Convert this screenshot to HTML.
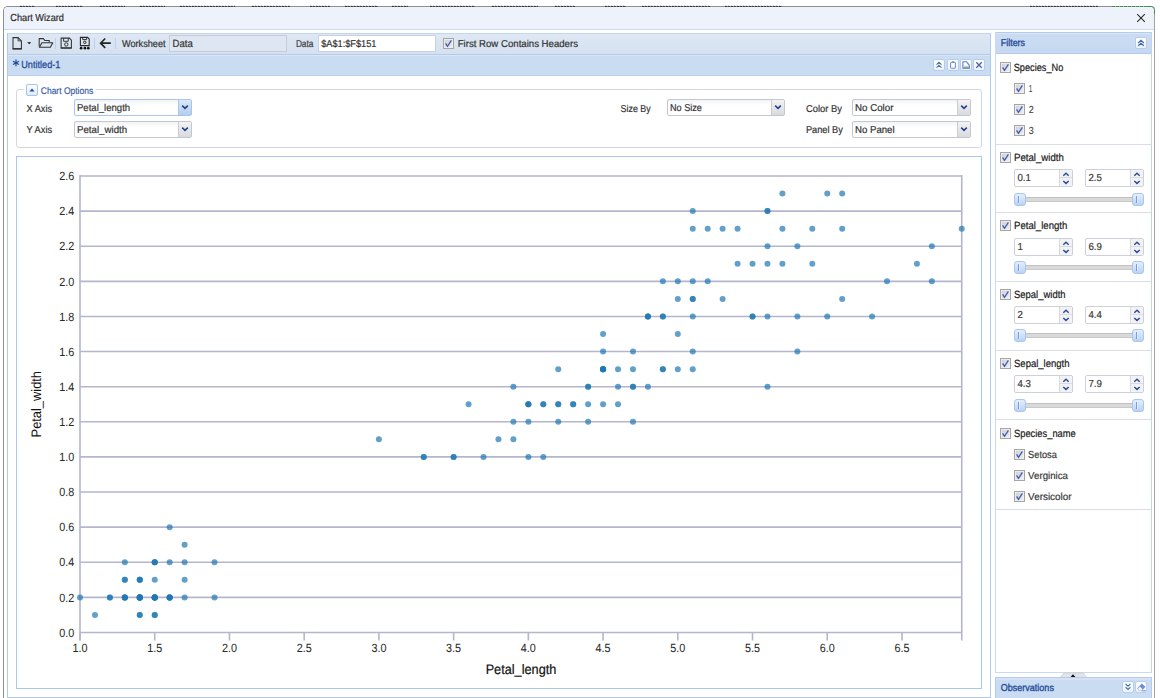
<!DOCTYPE html>
<html><head><meta charset="utf-8"><style>
html,body{margin:0;padding:0;}
body{width:1160px;height:698px;position:relative;overflow:hidden;background:#fff;font-family:"Liberation Sans",sans-serif;}
.b{position:absolute;}
.t{position:absolute;white-space:nowrap;}
</style></head><body>
<div class="b" style="left:3px;top:6px;width:1152px;height:714px;border:1px solid #8f8f8f;border-right-color:#a2a2a2;border-radius:5px 5px 0 0;background:#fff;box-sizing:border-box"></div>
<div class="b" style="left:4px;top:7px;width:1150px;height:22px;background:#eef2fa;border-radius:4px 4px 0 0"></div>
<div class="b" style="left:4px;top:29px;width:1150px;height:1px;background:#c9daf0"></div>
<svg class="b" style="left:1136px;top:13px;" width="10" height="10" viewBox="0 0 10 10"><path d="M1.2 1.2L8.8 8.8M8.8 1.2L1.2 8.8" stroke="#2a2a2a" stroke-width="1.05" fill="none"/></svg>
<div class="b" style="left:20px;top:6px;width:15px;height:1px;background:repeating-linear-gradient(90deg,#3a3a3a 0 2px,#777 2px 3px,#444 3px 5px,#8a8a8a 5px 6px)"></div>
<div class="b" style="left:20px;top:5px;width:15px;height:1px;background:repeating-linear-gradient(90deg,#d4d4d4 0 1px,#f4f4f4 1px 3px)"></div>
<div class="b" style="left:56px;top:6px;width:27px;height:1px;background:repeating-linear-gradient(90deg,#3a3a3a 0 2px,#777 2px 3px,#444 3px 5px,#8a8a8a 5px 6px)"></div>
<div class="b" style="left:56px;top:5px;width:27px;height:1px;background:repeating-linear-gradient(90deg,#d4d4d4 0 1px,#f4f4f4 1px 3px)"></div>
<div class="b" style="left:100px;top:6px;width:25px;height:1px;background:repeating-linear-gradient(90deg,#3a3a3a 0 2px,#777 2px 3px,#444 3px 5px,#8a8a8a 5px 6px)"></div>
<div class="b" style="left:100px;top:5px;width:25px;height:1px;background:repeating-linear-gradient(90deg,#d4d4d4 0 1px,#f4f4f4 1px 3px)"></div>
<div class="b" style="left:140px;top:6px;width:25px;height:1px;background:repeating-linear-gradient(90deg,#3a3a3a 0 2px,#777 2px 3px,#444 3px 5px,#8a8a8a 5px 6px)"></div>
<div class="b" style="left:140px;top:5px;width:25px;height:1px;background:repeating-linear-gradient(90deg,#d4d4d4 0 1px,#f4f4f4 1px 3px)"></div>
<div class="b" style="left:180px;top:6px;width:55px;height:1px;background:repeating-linear-gradient(90deg,#3a3a3a 0 2px,#777 2px 3px,#444 3px 5px,#8a8a8a 5px 6px)"></div>
<div class="b" style="left:180px;top:5px;width:55px;height:1px;background:repeating-linear-gradient(90deg,#d4d4d4 0 1px,#f4f4f4 1px 3px)"></div>
<div class="b" style="left:252px;top:6px;width:38px;height:1px;background:repeating-linear-gradient(90deg,#3a3a3a 0 2px,#777 2px 3px,#444 3px 5px,#8a8a8a 5px 6px)"></div>
<div class="b" style="left:252px;top:5px;width:38px;height:1px;background:repeating-linear-gradient(90deg,#d4d4d4 0 1px,#f4f4f4 1px 3px)"></div>
<div class="b" style="left:310px;top:6px;width:20px;height:1px;background:repeating-linear-gradient(90deg,#3a3a3a 0 2px,#777 2px 3px,#444 3px 5px,#8a8a8a 5px 6px)"></div>
<div class="b" style="left:310px;top:5px;width:20px;height:1px;background:repeating-linear-gradient(90deg,#d4d4d4 0 1px,#f4f4f4 1px 3px)"></div>
<div class="b" style="left:345px;top:6px;width:33px;height:1px;background:repeating-linear-gradient(90deg,#3a3a3a 0 2px,#777 2px 3px,#444 3px 5px,#8a8a8a 5px 6px)"></div>
<div class="b" style="left:345px;top:5px;width:33px;height:1px;background:repeating-linear-gradient(90deg,#d4d4d4 0 1px,#f4f4f4 1px 3px)"></div>
<div class="b" style="left:392px;top:6px;width:16px;height:1px;background:repeating-linear-gradient(90deg,#3a3a3a 0 2px,#777 2px 3px,#444 3px 5px,#8a8a8a 5px 6px)"></div>
<div class="b" style="left:392px;top:5px;width:16px;height:1px;background:repeating-linear-gradient(90deg,#d4d4d4 0 1px,#f4f4f4 1px 3px)"></div>
<div class="b" style="left:430px;top:6px;width:45px;height:1px;background:repeating-linear-gradient(90deg,#3a3a3a 0 2px,#777 2px 3px,#444 3px 5px,#8a8a8a 5px 6px)"></div>
<div class="b" style="left:430px;top:5px;width:45px;height:1px;background:repeating-linear-gradient(90deg,#d4d4d4 0 1px,#f4f4f4 1px 3px)"></div>
<div class="b" style="left:492px;top:6px;width:46px;height:1px;background:repeating-linear-gradient(90deg,#3a3a3a 0 2px,#777 2px 3px,#444 3px 5px,#8a8a8a 5px 6px)"></div>
<div class="b" style="left:492px;top:5px;width:46px;height:1px;background:repeating-linear-gradient(90deg,#d4d4d4 0 1px,#f4f4f4 1px 3px)"></div>
<div class="b" style="left:555px;top:6px;width:20px;height:1px;background:repeating-linear-gradient(90deg,#3a3a3a 0 2px,#777 2px 3px,#444 3px 5px,#8a8a8a 5px 6px)"></div>
<div class="b" style="left:555px;top:5px;width:20px;height:1px;background:repeating-linear-gradient(90deg,#d4d4d4 0 1px,#f4f4f4 1px 3px)"></div>
<div class="b" style="left:605px;top:6px;width:21px;height:1px;background:repeating-linear-gradient(90deg,#3a3a3a 0 2px,#777 2px 3px,#444 3px 5px,#8a8a8a 5px 6px)"></div>
<div class="b" style="left:605px;top:5px;width:21px;height:1px;background:repeating-linear-gradient(90deg,#d4d4d4 0 1px,#f4f4f4 1px 3px)"></div>
<div class="b" style="left:642px;top:6px;width:68px;height:1px;background:repeating-linear-gradient(90deg,#3a3a3a 0 2px,#777 2px 3px,#444 3px 5px,#8a8a8a 5px 6px)"></div>
<div class="b" style="left:642px;top:5px;width:68px;height:1px;background:repeating-linear-gradient(90deg,#d4d4d4 0 1px,#f4f4f4 1px 3px)"></div>
<div class="b" style="left:725px;top:6px;width:57px;height:1px;background:repeating-linear-gradient(90deg,#3a3a3a 0 2px,#777 2px 3px,#444 3px 5px,#8a8a8a 5px 6px)"></div>
<div class="b" style="left:725px;top:5px;width:57px;height:1px;background:repeating-linear-gradient(90deg,#d4d4d4 0 1px,#f4f4f4 1px 3px)"></div>
<div class="b" style="left:1030px;top:6px;width:68px;height:1px;background:repeating-linear-gradient(90deg,#3a3a3a 0 2px,#777 2px 3px,#444 3px 5px,#8a8a8a 5px 6px)"></div>
<div class="b" style="left:1030px;top:5px;width:68px;height:1px;background:repeating-linear-gradient(90deg,#d4d4d4 0 1px,#f4f4f4 1px 3px)"></div>
<div class="b" style="left:1112px;top:6px;width:38px;height:1px;background:repeating-linear-gradient(90deg,#3f8a4c 0 3px,#8fb99a 3px 4px);opacity:.85"></div>
<svg class="b" style="left:1146px;top:5px;" width="10" height="12" viewBox="0 0 10 12"><path d="M0 1.5H5.5Q8.5 1.5 8.5 4.5V9" fill="none" stroke="#3f8a4c" stroke-width="1" opacity=".85"/></svg>
<div class="b" style="left:7px;top:33px;width:984px;height:665px;border:1px solid #afcaee;box-sizing:border-box;background:#fff"></div>
<div class="b" style="left:8px;top:33px;width:982px;height:21px;background:linear-gradient(#dfe8f4,#d5e1f0);border-top:1px solid #c4d6ee;box-sizing:border-box"></div>
<div class="b" style="left:8px;top:54px;width:982px;height:1px;background:#b2cbea"></div>
<div class="b" style="left:8px;top:55px;width:982px;height:1px;background:#dae6f5"></div>
<div class="b" style="left:8px;top:56px;width:982px;height:19px;background:#c9dcf2"></div>
<div class="b" style="left:8px;top:75px;width:982px;height:1px;background:#b8cfee"></div>
<svg class="b" style="left:11px;top:36px;" width="24" height="15" viewBox="0 0 24 15"><path d="M2 1.6H7.1L10.4 4.9V12.7H2Z" fill="none" stroke="#333" stroke-width="1.05"/><path d="M7.1 1.6V4.9H10.4" fill="none" stroke="#333" stroke-width=".9"/><path d="M1.6 12.8H10.8" stroke="#333" stroke-width="1.5"/><path d="M16.2 6.3H20.2L18.2 8.2Z" fill="#111"/></svg>
<svg class="b" style="left:38px;top:37px;" width="16" height="12" viewBox="0 0 16 12"><path d="M1.2 9.6V1.6H5.3L6.8 3.4H11.3V5.4" fill="none" stroke="#333" stroke-width="1.05" stroke-linejoin="round"/><path d="M1.4 10.3L3.9 5.7H14.8L12.3 10.3Z" fill="none" stroke="#333" stroke-width="1.1" stroke-linejoin="round"/></svg>
<div class="b" style="left:55px;top:38px;width:1px;height:11px;background:#b9d1f2"></div>
<svg class="b" style="left:60px;top:37px;" width="13" height="13" viewBox="0 0 13 13"><path d="M1.1 1.1H9.4L11.4 3.1V10.9H1.1Z" fill="none" stroke="#333" stroke-width="1.05"/><path d="M3.6 1.1V4.3H8.3V1.1" fill="none" stroke="#333" stroke-width=".95"/><circle cx="6.3" cy="7.5" r="1.7" fill="none" stroke="#333" stroke-width="1"/><path d="M0.8 11H11.6" stroke="#333" stroke-width="1.3"/></svg>
<svg class="b" style="left:79px;top:36px;" width="12" height="14" viewBox="0 0 12 14"><path d="M1.4 1.4H8.6L10.2 3V9.6H1.4Z" fill="none" stroke="#2a2a2a" stroke-width="1.1"/><path d="M3.7 1.4V3.6H7.6V1.4" fill="none" stroke="#2a2a2a" stroke-width=".95"/><circle cx="5.8" cy="6.3" r="1.25" fill="none" stroke="#2a2a2a" stroke-width="1"/><circle cx="2.1" cy="12.2" r="1.35" fill="#111"/><circle cx="5.9" cy="12.2" r="1.35" fill="#111"/><circle cx="9.3" cy="12.2" r="1.35" fill="#111"/></svg>
<div class="b" style="left:94px;top:38px;width:1px;height:11px;background:#b9d1f2"></div>
<svg class="b" style="left:99px;top:37px;" width="13" height="12" viewBox="0 0 13 12"><path d="M11.8 6.2H2.2M6.2 1.5L1.6 6.2L6.2 10.9" fill="none" stroke="#262626" stroke-width="1.7"/></svg>
<div class="b" style="left:115px;top:38px;width:1px;height:11px;background:#b9d1f2"></div>
<div class="b" style="left:169px;top:35px;width:118px;height:17px;background:#dde6f1;border:1px solid #c3ccd8;box-sizing:border-box"></div>
<div class="b" style="left:318px;top:35px;width:118px;height:17px;background:#fff;border:1px solid #c8d1dc;box-sizing:border-box"></div>
<svg class="b" style="left:443px;top:38px;" width="11" height="11" viewBox="0 0 11 11"><defs><linearGradient id="cbg" x1="0" y1="0" x2="1" y2="1"><stop offset="0" stop-color="#cdcdcd"/><stop offset="1" stop-color="#f2f2f2"/></linearGradient></defs><rect x="0.5" y="0.5" width="10" height="10" fill="url(#cbg)" stroke="#a6a6a6"/><rect x="1.5" y="1.5" width="8" height="8" fill="none" stroke="#f2f2f2" stroke-width=".7"/><path d="M2.6 5.3L4.5 8.3L8.4 2.4" fill="none" stroke="#3d5cb8" stroke-width="1.35"/></svg>
<svg class="b" style="left:12px;top:59px;" width="8" height="8" viewBox="0 0 8 8"><path d="M4 0.4V7.2M1 2.2L7 5.4M7 2.2L1 5.4" stroke="#1e4a9c" stroke-width="1.15"/></svg>
<div class="b" style="left:933px;top:59px;width:12px;height:12px;border:1px solid #b9cdea;border-radius:2px;background:linear-gradient(#ffffff,#eaf1fa);box-sizing:border-box"></div>
<svg class="b" style="left:933px;top:59px;" width="12" height="12" viewBox="0 0 12 12"><path d="M3.5 5.6L6 3.3L8.5 5.6M3.5 8.6L6 6.3L8.5 8.6" fill="none" stroke="#4a78b0" stroke-width="1.1"/></svg>
<div class="b" style="left:947px;top:59px;width:12px;height:12px;border:1px solid #b9cdea;border-radius:2px;background:linear-gradient(#ffffff,#eaf1fa);box-sizing:border-box"></div>
<svg class="b" style="left:947px;top:59px;" width="12" height="12" viewBox="0 0 12 12"><rect x="3.6" y="3.4" width="4.8" height="5.8" rx=".6" fill="#fff" stroke="#6a86c8" stroke-width="1"/><path d="M5 2.8H7" stroke="#6a86c8" stroke-width="1"/></svg>
<div class="b" style="left:960px;top:59px;width:12px;height:12px;border:1px solid #b9cdea;border-radius:2px;background:linear-gradient(#ffffff,#eaf1fa);box-sizing:border-box"></div>
<svg class="b" style="left:960px;top:59px;" width="12" height="12" viewBox="0 0 12 12"><path d="M2.9 9.3V2.7H6.4L9.4 6.3V9.3Z" fill="#fff" stroke="#5f7fc8" stroke-width="1.1" stroke-linejoin="round"/><path d="M3.5 7.3H8.9" stroke="#a6d68f" stroke-width="1"/><path d="M3.4 8.8H8.9" stroke="#5f7fc8" stroke-width="1"/></svg>
<div class="b" style="left:973px;top:59px;width:12px;height:12px;border:1px solid #b9cdea;border-radius:2px;background:linear-gradient(#ffffff,#eaf1fa);box-sizing:border-box"></div>
<svg class="b" style="left:973px;top:59px;" width="12" height="12" viewBox="0 0 12 12"><path d="M3.3 3.3L8.7 8.7M8.7 3.3L3.3 8.7" stroke="#4a5fb0" stroke-width="1.3"/></svg>
<div class="b" style="left:16px;top:89px;width:966px;height:59px;border:1px solid #d5d8df;border-radius:3px;box-sizing:border-box"></div>
<div class="b" style="left:24px;top:84px;width:72px;height:12px;background:#fff"></div>
<div class="b" style="left:26px;top:84px;width:12px;height:12px;border:1px solid #a9c3e6;border-radius:2px;background:linear-gradient(#fdfeff,#dfeaf8);box-sizing:border-box"></div>
<svg class="b" style="left:26px;top:84px;" width="12" height="12" viewBox="0 0 12 12"><path d="M3.4 7.4L6 4.6L8.6 7.4Z" fill="#2846a0"/></svg>
<div class="b" style="left:74px;top:99px;width:118px;height:17px;border:1px solid #a7c6ec;border-radius:2px;background:linear-gradient(#f1f3f6,#ffffff 35%);box-sizing:border-box"></div>
<div class="b" style="left:178px;top:100px;width:13px;height:15px;background:linear-gradient(#dbe8f7,#b3cdee);border-left:1px solid #a7c6ec;box-sizing:border-box"></div>
<svg class="b" style="left:179px;top:104px;" width="12" height="7" viewBox="0 0 12 7"><path d="M3.2 1.6L6 4.4L8.8 1.6" fill="none" stroke="#1f3f8f" stroke-width="1.5"/></svg>
<div class="b" style="left:74px;top:121px;width:118px;height:17px;border:1px solid #c3c7d0;border-radius:2px;background:linear-gradient(#f1f3f6,#ffffff 35%);box-sizing:border-box"></div>
<div class="b" style="left:178px;top:122px;width:13px;height:15px;background:linear-gradient(#f3f3f3,#d9dadd);border-left:1px solid #c9ccd2;box-sizing:border-box"></div>
<svg class="b" style="left:179px;top:126px;" width="12" height="7" viewBox="0 0 12 7"><path d="M3.2 1.6L6 4.4L8.8 1.6" fill="none" stroke="#1f3f8f" stroke-width="1.5"/></svg>
<div class="b" style="left:667px;top:99px;width:118px;height:17px;border:1px solid #c3c7d0;border-radius:2px;background:linear-gradient(#f1f3f6,#ffffff 35%);box-sizing:border-box"></div>
<div class="b" style="left:771px;top:100px;width:13px;height:15px;background:linear-gradient(#f3f3f3,#d9dadd);border-left:1px solid #c9ccd2;box-sizing:border-box"></div>
<svg class="b" style="left:772px;top:104px;" width="12" height="7" viewBox="0 0 12 7"><path d="M3.2 1.6L6 4.4L8.8 1.6" fill="none" stroke="#1f3f8f" stroke-width="1.5"/></svg>
<div class="b" style="left:852px;top:99px;width:119px;height:17px;border:1px solid #c3c7d0;border-radius:2px;background:linear-gradient(#f1f3f6,#ffffff 35%);box-sizing:border-box"></div>
<div class="b" style="left:957px;top:100px;width:13px;height:15px;background:linear-gradient(#f3f3f3,#d9dadd);border-left:1px solid #c9ccd2;box-sizing:border-box"></div>
<svg class="b" style="left:958px;top:104px;" width="12" height="7" viewBox="0 0 12 7"><path d="M3.2 1.6L6 4.4L8.8 1.6" fill="none" stroke="#1f3f8f" stroke-width="1.5"/></svg>
<div class="b" style="left:852px;top:121px;width:119px;height:17px;border:1px solid #c3c7d0;border-radius:2px;background:linear-gradient(#f1f3f6,#ffffff 35%);box-sizing:border-box"></div>
<div class="b" style="left:957px;top:122px;width:13px;height:15px;background:linear-gradient(#f3f3f3,#d9dadd);border-left:1px solid #c9ccd2;box-sizing:border-box"></div>
<svg class="b" style="left:958px;top:126px;" width="12" height="7" viewBox="0 0 12 7"><path d="M3.2 1.6L6 4.4L8.8 1.6" fill="none" stroke="#1f3f8f" stroke-width="1.5"/></svg>
<div class="b" style="left:16px;top:156px;width:966px;height:533px;border:1px solid #a9c8ef;box-sizing:border-box;background:#fff"></div>
<svg class="b" style="left:0px;top:0px;pointer-events:none" width="1160" height="698" viewBox="0 0 1160 698"><line x1="80.0" y1="632.50" x2="961.75" y2="632.50" stroke="#b3b6cc" stroke-width="1.6"/><line x1="80.0" y1="597.38" x2="961.75" y2="597.38" stroke="#b3b6cc" stroke-width="1.6"/><line x1="80.0" y1="562.27" x2="961.75" y2="562.27" stroke="#b3b6cc" stroke-width="1.6"/><line x1="80.0" y1="527.15" x2="961.75" y2="527.15" stroke="#b3b6cc" stroke-width="1.6"/><line x1="80.0" y1="492.04" x2="961.75" y2="492.04" stroke="#b3b6cc" stroke-width="1.6"/><line x1="80.0" y1="456.92" x2="961.75" y2="456.92" stroke="#b3b6cc" stroke-width="1.6"/><line x1="80.0" y1="421.80" x2="961.75" y2="421.80" stroke="#b3b6cc" stroke-width="1.6"/><line x1="80.0" y1="386.69" x2="961.75" y2="386.69" stroke="#b3b6cc" stroke-width="1.6"/><line x1="80.0" y1="351.57" x2="961.75" y2="351.57" stroke="#b3b6cc" stroke-width="1.6"/><line x1="80.0" y1="316.46" x2="961.75" y2="316.46" stroke="#b3b6cc" stroke-width="1.6"/><line x1="80.0" y1="281.34" x2="961.75" y2="281.34" stroke="#b3b6cc" stroke-width="1.6"/><line x1="80.0" y1="246.22" x2="961.75" y2="246.22" stroke="#b3b6cc" stroke-width="1.6"/><line x1="80.0" y1="211.11" x2="961.75" y2="211.11" stroke="#b3b6cc" stroke-width="1.6"/><line x1="80.0" y1="175.99" x2="961.75" y2="175.99" stroke="#b3b6cc" stroke-width="1.6"/><line x1="80.0" y1="175.09" x2="80.0" y2="640.5" stroke="#b3b6cc" stroke-width="1.6"/><line x1="961.75" y1="175.09" x2="961.75" y2="640.5" stroke="#b3b6cc" stroke-width="1.6"/><line x1="80.00" y1="632.5" x2="80.00" y2="640.5" stroke="#b3b6cc" stroke-width="1.6"/><line x1="154.72" y1="632.5" x2="154.72" y2="640.5" stroke="#b3b6cc" stroke-width="1.6"/><line x1="229.45" y1="632.5" x2="229.45" y2="640.5" stroke="#b3b6cc" stroke-width="1.6"/><line x1="304.17" y1="632.5" x2="304.17" y2="640.5" stroke="#b3b6cc" stroke-width="1.6"/><line x1="378.90" y1="632.5" x2="378.90" y2="640.5" stroke="#b3b6cc" stroke-width="1.6"/><line x1="453.62" y1="632.5" x2="453.62" y2="640.5" stroke="#b3b6cc" stroke-width="1.6"/><line x1="528.35" y1="632.5" x2="528.35" y2="640.5" stroke="#b3b6cc" stroke-width="1.6"/><line x1="603.07" y1="632.5" x2="603.07" y2="640.5" stroke="#b3b6cc" stroke-width="1.6"/><line x1="677.80" y1="632.5" x2="677.80" y2="640.5" stroke="#b3b6cc" stroke-width="1.6"/><line x1="752.52" y1="632.5" x2="752.52" y2="640.5" stroke="#b3b6cc" stroke-width="1.6"/><line x1="827.25" y1="632.5" x2="827.25" y2="640.5" stroke="#b3b6cc" stroke-width="1.6"/><line x1="901.97" y1="632.5" x2="901.97" y2="640.5" stroke="#b3b6cc" stroke-width="1.6"/><circle cx="139.78" cy="597.38" r="3" fill="#1f77b4" fill-opacity="0.7"/><circle cx="139.78" cy="597.38" r="3" fill="#1f77b4" fill-opacity="0.7"/><circle cx="124.84" cy="597.38" r="3" fill="#1f77b4" fill-opacity="0.7"/><circle cx="154.72" cy="597.38" r="3" fill="#1f77b4" fill-opacity="0.7"/><circle cx="139.78" cy="597.38" r="3" fill="#1f77b4" fill-opacity="0.7"/><circle cx="184.61" cy="562.27" r="3" fill="#1f77b4" fill-opacity="0.7"/><circle cx="139.78" cy="579.83" r="3" fill="#1f77b4" fill-opacity="0.7"/><circle cx="154.72" cy="597.38" r="3" fill="#1f77b4" fill-opacity="0.7"/><circle cx="139.78" cy="597.38" r="3" fill="#1f77b4" fill-opacity="0.7"/><circle cx="154.72" cy="614.94" r="3" fill="#1f77b4" fill-opacity="0.7"/><circle cx="154.72" cy="597.38" r="3" fill="#1f77b4" fill-opacity="0.7"/><circle cx="169.67" cy="597.38" r="3" fill="#1f77b4" fill-opacity="0.7"/><circle cx="139.78" cy="614.94" r="3" fill="#1f77b4" fill-opacity="0.7"/><circle cx="94.95" cy="614.94" r="3" fill="#1f77b4" fill-opacity="0.7"/><circle cx="109.89" cy="597.38" r="3" fill="#1f77b4" fill-opacity="0.7"/><circle cx="154.72" cy="562.27" r="3" fill="#1f77b4" fill-opacity="0.7"/><circle cx="124.84" cy="562.27" r="3" fill="#1f77b4" fill-opacity="0.7"/><circle cx="139.78" cy="579.83" r="3" fill="#1f77b4" fill-opacity="0.7"/><circle cx="184.61" cy="579.83" r="3" fill="#1f77b4" fill-opacity="0.7"/><circle cx="154.72" cy="579.83" r="3" fill="#1f77b4" fill-opacity="0.7"/><circle cx="184.61" cy="597.38" r="3" fill="#1f77b4" fill-opacity="0.7"/><circle cx="154.72" cy="562.27" r="3" fill="#1f77b4" fill-opacity="0.7"/><circle cx="80.00" cy="597.38" r="3" fill="#1f77b4" fill-opacity="0.7"/><circle cx="184.61" cy="544.71" r="3" fill="#1f77b4" fill-opacity="0.7"/><circle cx="214.50" cy="597.38" r="3" fill="#1f77b4" fill-opacity="0.7"/><circle cx="169.67" cy="597.38" r="3" fill="#1f77b4" fill-opacity="0.7"/><circle cx="169.67" cy="562.27" r="3" fill="#1f77b4" fill-opacity="0.7"/><circle cx="154.72" cy="597.38" r="3" fill="#1f77b4" fill-opacity="0.7"/><circle cx="139.78" cy="597.38" r="3" fill="#1f77b4" fill-opacity="0.7"/><circle cx="169.67" cy="597.38" r="3" fill="#1f77b4" fill-opacity="0.7"/><circle cx="169.67" cy="597.38" r="3" fill="#1f77b4" fill-opacity="0.7"/><circle cx="154.72" cy="562.27" r="3" fill="#1f77b4" fill-opacity="0.7"/><circle cx="154.72" cy="614.94" r="3" fill="#1f77b4" fill-opacity="0.7"/><circle cx="139.78" cy="597.38" r="3" fill="#1f77b4" fill-opacity="0.7"/><circle cx="154.72" cy="597.38" r="3" fill="#1f77b4" fill-opacity="0.7"/><circle cx="109.89" cy="597.38" r="3" fill="#1f77b4" fill-opacity="0.7"/><circle cx="124.84" cy="597.38" r="3" fill="#1f77b4" fill-opacity="0.7"/><circle cx="139.78" cy="614.94" r="3" fill="#1f77b4" fill-opacity="0.7"/><circle cx="124.84" cy="597.38" r="3" fill="#1f77b4" fill-opacity="0.7"/><circle cx="154.72" cy="597.38" r="3" fill="#1f77b4" fill-opacity="0.7"/><circle cx="124.84" cy="579.83" r="3" fill="#1f77b4" fill-opacity="0.7"/><circle cx="124.84" cy="579.83" r="3" fill="#1f77b4" fill-opacity="0.7"/><circle cx="124.84" cy="597.38" r="3" fill="#1f77b4" fill-opacity="0.7"/><circle cx="169.67" cy="527.15" r="3" fill="#1f77b4" fill-opacity="0.7"/><circle cx="214.50" cy="562.27" r="3" fill="#1f77b4" fill-opacity="0.7"/><circle cx="139.78" cy="579.83" r="3" fill="#1f77b4" fill-opacity="0.7"/><circle cx="169.67" cy="597.38" r="3" fill="#1f77b4" fill-opacity="0.7"/><circle cx="139.78" cy="597.38" r="3" fill="#1f77b4" fill-opacity="0.7"/><circle cx="154.72" cy="597.38" r="3" fill="#1f77b4" fill-opacity="0.7"/><circle cx="139.78" cy="597.38" r="3" fill="#1f77b4" fill-opacity="0.7"/><circle cx="632.97" cy="386.69" r="3" fill="#1f77b4" fill-opacity="0.7"/><circle cx="603.07" cy="369.13" r="3" fill="#1f77b4" fill-opacity="0.7"/><circle cx="662.86" cy="369.13" r="3" fill="#1f77b4" fill-opacity="0.7"/><circle cx="528.35" cy="404.25" r="3" fill="#1f77b4" fill-opacity="0.7"/><circle cx="618.02" cy="369.13" r="3" fill="#1f77b4" fill-opacity="0.7"/><circle cx="603.07" cy="404.25" r="3" fill="#1f77b4" fill-opacity="0.7"/><circle cx="632.97" cy="351.57" r="3" fill="#1f77b4" fill-opacity="0.7"/><circle cx="423.73" cy="456.92" r="3" fill="#1f77b4" fill-opacity="0.7"/><circle cx="618.02" cy="404.25" r="3" fill="#1f77b4" fill-opacity="0.7"/><circle cx="513.40" cy="386.69" r="3" fill="#1f77b4" fill-opacity="0.7"/><circle cx="453.62" cy="456.92" r="3" fill="#1f77b4" fill-opacity="0.7"/><circle cx="558.24" cy="369.13" r="3" fill="#1f77b4" fill-opacity="0.7"/><circle cx="528.35" cy="456.92" r="3" fill="#1f77b4" fill-opacity="0.7"/><circle cx="632.97" cy="386.69" r="3" fill="#1f77b4" fill-opacity="0.7"/><circle cx="468.57" cy="404.25" r="3" fill="#1f77b4" fill-opacity="0.7"/><circle cx="588.13" cy="386.69" r="3" fill="#1f77b4" fill-opacity="0.7"/><circle cx="603.07" cy="369.13" r="3" fill="#1f77b4" fill-opacity="0.7"/><circle cx="543.29" cy="456.92" r="3" fill="#1f77b4" fill-opacity="0.7"/><circle cx="603.07" cy="369.13" r="3" fill="#1f77b4" fill-opacity="0.7"/><circle cx="513.40" cy="439.36" r="3" fill="#1f77b4" fill-opacity="0.7"/><circle cx="647.91" cy="316.46" r="3" fill="#1f77b4" fill-opacity="0.7"/><circle cx="528.35" cy="404.25" r="3" fill="#1f77b4" fill-opacity="0.7"/><circle cx="662.86" cy="369.13" r="3" fill="#1f77b4" fill-opacity="0.7"/><circle cx="632.97" cy="421.80" r="3" fill="#1f77b4" fill-opacity="0.7"/><circle cx="573.18" cy="404.25" r="3" fill="#1f77b4" fill-opacity="0.7"/><circle cx="588.13" cy="386.69" r="3" fill="#1f77b4" fill-opacity="0.7"/><circle cx="647.91" cy="386.69" r="3" fill="#1f77b4" fill-opacity="0.7"/><circle cx="677.80" cy="334.01" r="3" fill="#1f77b4" fill-opacity="0.7"/><circle cx="603.07" cy="369.13" r="3" fill="#1f77b4" fill-opacity="0.7"/><circle cx="453.62" cy="456.92" r="3" fill="#1f77b4" fill-opacity="0.7"/><circle cx="498.46" cy="439.36" r="3" fill="#1f77b4" fill-opacity="0.7"/><circle cx="483.51" cy="456.92" r="3" fill="#1f77b4" fill-opacity="0.7"/><circle cx="513.40" cy="421.80" r="3" fill="#1f77b4" fill-opacity="0.7"/><circle cx="692.74" cy="351.57" r="3" fill="#1f77b4" fill-opacity="0.7"/><circle cx="603.07" cy="369.13" r="3" fill="#1f77b4" fill-opacity="0.7"/><circle cx="603.07" cy="351.57" r="3" fill="#1f77b4" fill-opacity="0.7"/><circle cx="632.97" cy="369.13" r="3" fill="#1f77b4" fill-opacity="0.7"/><circle cx="588.13" cy="404.25" r="3" fill="#1f77b4" fill-opacity="0.7"/><circle cx="543.29" cy="404.25" r="3" fill="#1f77b4" fill-opacity="0.7"/><circle cx="528.35" cy="404.25" r="3" fill="#1f77b4" fill-opacity="0.7"/><circle cx="588.13" cy="421.80" r="3" fill="#1f77b4" fill-opacity="0.7"/><circle cx="618.02" cy="386.69" r="3" fill="#1f77b4" fill-opacity="0.7"/><circle cx="528.35" cy="421.80" r="3" fill="#1f77b4" fill-opacity="0.7"/><circle cx="423.73" cy="456.92" r="3" fill="#1f77b4" fill-opacity="0.7"/><circle cx="558.24" cy="404.25" r="3" fill="#1f77b4" fill-opacity="0.7"/><circle cx="558.24" cy="421.80" r="3" fill="#1f77b4" fill-opacity="0.7"/><circle cx="558.24" cy="404.25" r="3" fill="#1f77b4" fill-opacity="0.7"/><circle cx="573.18" cy="404.25" r="3" fill="#1f77b4" fill-opacity="0.7"/><circle cx="378.90" cy="439.36" r="3" fill="#1f77b4" fill-opacity="0.7"/><circle cx="543.29" cy="404.25" r="3" fill="#1f77b4" fill-opacity="0.7"/><circle cx="827.25" cy="193.55" r="3" fill="#1f77b4" fill-opacity="0.7"/><circle cx="692.74" cy="298.90" r="3" fill="#1f77b4" fill-opacity="0.7"/><circle cx="812.30" cy="263.78" r="3" fill="#1f77b4" fill-opacity="0.7"/><circle cx="767.47" cy="316.46" r="3" fill="#1f77b4" fill-opacity="0.7"/><circle cx="797.36" cy="246.22" r="3" fill="#1f77b4" fill-opacity="0.7"/><circle cx="916.92" cy="263.78" r="3" fill="#1f77b4" fill-opacity="0.7"/><circle cx="603.07" cy="334.01" r="3" fill="#1f77b4" fill-opacity="0.7"/><circle cx="872.08" cy="316.46" r="3" fill="#1f77b4" fill-opacity="0.7"/><circle cx="797.36" cy="316.46" r="3" fill="#1f77b4" fill-opacity="0.7"/><circle cx="842.19" cy="193.55" r="3" fill="#1f77b4" fill-opacity="0.7"/><circle cx="692.74" cy="281.34" r="3" fill="#1f77b4" fill-opacity="0.7"/><circle cx="722.63" cy="298.90" r="3" fill="#1f77b4" fill-opacity="0.7"/><circle cx="752.52" cy="263.78" r="3" fill="#1f77b4" fill-opacity="0.7"/><circle cx="677.80" cy="281.34" r="3" fill="#1f77b4" fill-opacity="0.7"/><circle cx="692.74" cy="211.11" r="3" fill="#1f77b4" fill-opacity="0.7"/><circle cx="722.63" cy="228.67" r="3" fill="#1f77b4" fill-opacity="0.7"/><circle cx="752.52" cy="316.46" r="3" fill="#1f77b4" fill-opacity="0.7"/><circle cx="931.87" cy="246.22" r="3" fill="#1f77b4" fill-opacity="0.7"/><circle cx="961.75" cy="228.67" r="3" fill="#1f77b4" fill-opacity="0.7"/><circle cx="677.80" cy="369.13" r="3" fill="#1f77b4" fill-opacity="0.7"/><circle cx="782.41" cy="228.67" r="3" fill="#1f77b4" fill-opacity="0.7"/><circle cx="662.86" cy="281.34" r="3" fill="#1f77b4" fill-opacity="0.7"/><circle cx="931.87" cy="281.34" r="3" fill="#1f77b4" fill-opacity="0.7"/><circle cx="662.86" cy="316.46" r="3" fill="#1f77b4" fill-opacity="0.7"/><circle cx="782.41" cy="263.78" r="3" fill="#1f77b4" fill-opacity="0.7"/><circle cx="827.25" cy="316.46" r="3" fill="#1f77b4" fill-opacity="0.7"/><circle cx="647.91" cy="316.46" r="3" fill="#1f77b4" fill-opacity="0.7"/><circle cx="662.86" cy="316.46" r="3" fill="#1f77b4" fill-opacity="0.7"/><circle cx="767.47" cy="263.78" r="3" fill="#1f77b4" fill-opacity="0.7"/><circle cx="797.36" cy="351.57" r="3" fill="#1f77b4" fill-opacity="0.7"/><circle cx="842.19" cy="298.90" r="3" fill="#1f77b4" fill-opacity="0.7"/><circle cx="887.03" cy="281.34" r="3" fill="#1f77b4" fill-opacity="0.7"/><circle cx="767.47" cy="246.22" r="3" fill="#1f77b4" fill-opacity="0.7"/><circle cx="692.74" cy="369.13" r="3" fill="#1f77b4" fill-opacity="0.7"/><circle cx="767.47" cy="386.69" r="3" fill="#1f77b4" fill-opacity="0.7"/><circle cx="842.19" cy="228.67" r="3" fill="#1f77b4" fill-opacity="0.7"/><circle cx="767.47" cy="211.11" r="3" fill="#1f77b4" fill-opacity="0.7"/><circle cx="752.52" cy="316.46" r="3" fill="#1f77b4" fill-opacity="0.7"/><circle cx="647.91" cy="316.46" r="3" fill="#1f77b4" fill-opacity="0.7"/><circle cx="737.58" cy="263.78" r="3" fill="#1f77b4" fill-opacity="0.7"/><circle cx="767.47" cy="211.11" r="3" fill="#1f77b4" fill-opacity="0.7"/><circle cx="692.74" cy="228.67" r="3" fill="#1f77b4" fill-opacity="0.7"/><circle cx="692.74" cy="298.90" r="3" fill="#1f77b4" fill-opacity="0.7"/><circle cx="812.30" cy="228.67" r="3" fill="#1f77b4" fill-opacity="0.7"/><circle cx="782.41" cy="193.55" r="3" fill="#1f77b4" fill-opacity="0.7"/><circle cx="707.69" cy="228.67" r="3" fill="#1f77b4" fill-opacity="0.7"/><circle cx="677.80" cy="298.90" r="3" fill="#1f77b4" fill-opacity="0.7"/><circle cx="707.69" cy="281.34" r="3" fill="#1f77b4" fill-opacity="0.7"/><circle cx="737.58" cy="228.67" r="3" fill="#1f77b4" fill-opacity="0.7"/><circle cx="692.74" cy="316.46" r="3" fill="#1f77b4" fill-opacity="0.7"/></svg>
<div class="b" style="left:995px;top:32px;width:157px;height:641px;border:1px solid #b3cbed;border-left-color:#c9dbf3;border-right-color:#c0d5f1;border-bottom-color:#c6daf3;box-sizing:border-box;background:#fff"></div>
<div class="b" style="left:996px;top:33px;width:155px;height:21px;background:linear-gradient(#d8e6f6 0 1px,#cbdcf2 1px,#c6d9f1);border-bottom:1px solid #b3cbed;box-sizing:border-box"></div>
<div class="b" style="left:1135px;top:37px;width:12px;height:12px;border:1px solid #b9cdea;border-radius:2px;background:linear-gradient(#ffffff,#eaf1fa);box-sizing:border-box"></div>
<svg class="b" style="left:1135px;top:37px;" width="12" height="12" viewBox="0 0 12 12"><path d="M3.2 6L6 3.4L8.8 6M3.2 8.8L6 6.2L8.8 8.8" fill="none" stroke="#3b6ba8" stroke-width="1.2"/></svg>
<svg class="b" style="left:1000px;top:62px;" width="11" height="11" viewBox="0 0 11 11"><defs><linearGradient id="cbg" x1="0" y1="0" x2="1" y2="1"><stop offset="0" stop-color="#cdcdcd"/><stop offset="1" stop-color="#f2f2f2"/></linearGradient></defs><rect x="0.5" y="0.5" width="10" height="10" fill="url(#cbg)" stroke="#a6a6a6"/><rect x="1.5" y="1.5" width="8" height="8" fill="none" stroke="#f2f2f2" stroke-width=".7"/><path d="M2.6 5.3L4.5 8.3L8.4 2.4" fill="none" stroke="#3d5cb8" stroke-width="1.35"/></svg>
<svg class="b" style="left:1014px;top:83px;" width="11" height="11" viewBox="0 0 11 11"><defs><linearGradient id="cbg" x1="0" y1="0" x2="1" y2="1"><stop offset="0" stop-color="#cdcdcd"/><stop offset="1" stop-color="#f2f2f2"/></linearGradient></defs><rect x="0.5" y="0.5" width="10" height="10" fill="url(#cbg)" stroke="#a6a6a6"/><rect x="1.5" y="1.5" width="8" height="8" fill="none" stroke="#f2f2f2" stroke-width=".7"/><path d="M2.6 5.3L4.5 8.3L8.4 2.4" fill="none" stroke="#3d5cb8" stroke-width="1.35"/></svg>
<svg class="b" style="left:1014px;top:104px;" width="11" height="11" viewBox="0 0 11 11"><defs><linearGradient id="cbg" x1="0" y1="0" x2="1" y2="1"><stop offset="0" stop-color="#cdcdcd"/><stop offset="1" stop-color="#f2f2f2"/></linearGradient></defs><rect x="0.5" y="0.5" width="10" height="10" fill="url(#cbg)" stroke="#a6a6a6"/><rect x="1.5" y="1.5" width="8" height="8" fill="none" stroke="#f2f2f2" stroke-width=".7"/><path d="M2.6 5.3L4.5 8.3L8.4 2.4" fill="none" stroke="#3d5cb8" stroke-width="1.35"/></svg>
<svg class="b" style="left:1014px;top:125px;" width="11" height="11" viewBox="0 0 11 11"><defs><linearGradient id="cbg" x1="0" y1="0" x2="1" y2="1"><stop offset="0" stop-color="#cdcdcd"/><stop offset="1" stop-color="#f2f2f2"/></linearGradient></defs><rect x="0.5" y="0.5" width="10" height="10" fill="url(#cbg)" stroke="#a6a6a6"/><rect x="1.5" y="1.5" width="8" height="8" fill="none" stroke="#f2f2f2" stroke-width=".7"/><path d="M2.6 5.3L4.5 8.3L8.4 2.4" fill="none" stroke="#3d5cb8" stroke-width="1.35"/></svg>
<div class="b" style="left:996px;top:144px;width:155px;height:1px;background:#d9dee6"></div>
<svg class="b" style="left:1000px;top:152px;" width="11" height="11" viewBox="0 0 11 11"><defs><linearGradient id="cbg" x1="0" y1="0" x2="1" y2="1"><stop offset="0" stop-color="#cdcdcd"/><stop offset="1" stop-color="#f2f2f2"/></linearGradient></defs><rect x="0.5" y="0.5" width="10" height="10" fill="url(#cbg)" stroke="#a6a6a6"/><rect x="1.5" y="1.5" width="8" height="8" fill="none" stroke="#f2f2f2" stroke-width=".7"/><path d="M2.6 5.3L4.5 8.3L8.4 2.4" fill="none" stroke="#3d5cb8" stroke-width="1.35"/></svg>
<div class="b" style="left:1014px;top:169px;width:59px;height:18px;border:1px solid #cdd0da;border-radius:2px;background:#fff;box-sizing:border-box"></div>
<div class="b" style="left:1059px;top:170px;width:13px;height:16px;border-left:1px solid #d6d9e0;background:#f2f2f4;box-sizing:border-box"></div>
<div class="b" style="left:1060px;top:177px;width:12px;height:1px;background:#d9dce3"></div>
<svg class="b" style="left:1060px;top:170px;" width="12" height="17" viewBox="0 0 12 17"><path d="M3.3 5.7L6 3.3L8.7 5.7M3.3 11L6 13.4L8.7 11" fill="none" stroke="#2b4d98" stroke-width="1.5"/></svg>
<div class="b" style="left:1085px;top:169px;width:59px;height:18px;border:1px solid #cdd0da;border-radius:2px;background:#fff;box-sizing:border-box"></div>
<div class="b" style="left:1130px;top:170px;width:13px;height:16px;border-left:1px solid #d6d9e0;background:#f2f2f4;box-sizing:border-box"></div>
<div class="b" style="left:1131px;top:177px;width:12px;height:1px;background:#d9dce3"></div>
<svg class="b" style="left:1131px;top:170px;" width="12" height="17" viewBox="0 0 12 17"><path d="M3.3 5.7L6 3.3L8.7 5.7M3.3 11L6 13.4L8.7 11" fill="none" stroke="#2b4d98" stroke-width="1.5"/></svg>
<div class="b" style="left:1024px;top:197px;width:110px;height:5px;background:linear-gradient(#c2c2c2 0 1px,#d9d9d9 1px 4px,#c9c9c9 4px)"></div>
<div class="b" style="left:1014px;top:193px;width:12px;height:13px;border:1px solid #a8c6ee;border-radius:3px;background:linear-gradient(#e4effd,#b9d3f5);box-sizing:border-box"></div>
<div class="b" style="left:1018px;top:196px;width:1px;height:7px;background:#7b9bd3"></div>
<div class="b" style="left:1019px;top:196px;width:1px;height:7px;background:#f2f7ff;opacity:.6"></div>
<div class="b" style="left:1132px;top:193px;width:12px;height:13px;border:1px solid #a8c6ee;border-radius:3px;background:linear-gradient(#e4effd,#b9d3f5);box-sizing:border-box"></div>
<div class="b" style="left:1136px;top:196px;width:1px;height:7px;background:#7b9bd3"></div>
<div class="b" style="left:1137px;top:196px;width:1px;height:7px;background:#f2f7ff;opacity:.6"></div>
<div class="b" style="left:996px;top:212px;width:155px;height:1px;background:#d9dee6"></div>
<svg class="b" style="left:1000px;top:220px;" width="11" height="11" viewBox="0 0 11 11"><defs><linearGradient id="cbg" x1="0" y1="0" x2="1" y2="1"><stop offset="0" stop-color="#cdcdcd"/><stop offset="1" stop-color="#f2f2f2"/></linearGradient></defs><rect x="0.5" y="0.5" width="10" height="10" fill="url(#cbg)" stroke="#a6a6a6"/><rect x="1.5" y="1.5" width="8" height="8" fill="none" stroke="#f2f2f2" stroke-width=".7"/><path d="M2.6 5.3L4.5 8.3L8.4 2.4" fill="none" stroke="#3d5cb8" stroke-width="1.35"/></svg>
<div class="b" style="left:1014px;top:238px;width:59px;height:18px;border:1px solid #cdd0da;border-radius:2px;background:#fff;box-sizing:border-box"></div>
<div class="b" style="left:1059px;top:239px;width:13px;height:16px;border-left:1px solid #d6d9e0;background:#f2f2f4;box-sizing:border-box"></div>
<div class="b" style="left:1060px;top:246px;width:12px;height:1px;background:#d9dce3"></div>
<svg class="b" style="left:1060px;top:239px;" width="12" height="17" viewBox="0 0 12 17"><path d="M3.3 5.7L6 3.3L8.7 5.7M3.3 11L6 13.4L8.7 11" fill="none" stroke="#2b4d98" stroke-width="1.5"/></svg>
<div class="b" style="left:1085px;top:238px;width:59px;height:18px;border:1px solid #cdd0da;border-radius:2px;background:#fff;box-sizing:border-box"></div>
<div class="b" style="left:1130px;top:239px;width:13px;height:16px;border-left:1px solid #d6d9e0;background:#f2f2f4;box-sizing:border-box"></div>
<div class="b" style="left:1131px;top:246px;width:12px;height:1px;background:#d9dce3"></div>
<svg class="b" style="left:1131px;top:239px;" width="12" height="17" viewBox="0 0 12 17"><path d="M3.3 5.7L6 3.3L8.7 5.7M3.3 11L6 13.4L8.7 11" fill="none" stroke="#2b4d98" stroke-width="1.5"/></svg>
<div class="b" style="left:1024px;top:265px;width:110px;height:5px;background:linear-gradient(#c2c2c2 0 1px,#d9d9d9 1px 4px,#c9c9c9 4px)"></div>
<div class="b" style="left:1014px;top:261px;width:12px;height:13px;border:1px solid #a8c6ee;border-radius:3px;background:linear-gradient(#e4effd,#b9d3f5);box-sizing:border-box"></div>
<div class="b" style="left:1018px;top:264px;width:1px;height:7px;background:#7b9bd3"></div>
<div class="b" style="left:1019px;top:264px;width:1px;height:7px;background:#f2f7ff;opacity:.6"></div>
<div class="b" style="left:1132px;top:261px;width:12px;height:13px;border:1px solid #a8c6ee;border-radius:3px;background:linear-gradient(#e4effd,#b9d3f5);box-sizing:border-box"></div>
<div class="b" style="left:1136px;top:264px;width:1px;height:7px;background:#7b9bd3"></div>
<div class="b" style="left:1137px;top:264px;width:1px;height:7px;background:#f2f7ff;opacity:.6"></div>
<div class="b" style="left:996px;top:281px;width:155px;height:1px;background:#d9dee6"></div>
<svg class="b" style="left:1000px;top:289px;" width="11" height="11" viewBox="0 0 11 11"><defs><linearGradient id="cbg" x1="0" y1="0" x2="1" y2="1"><stop offset="0" stop-color="#cdcdcd"/><stop offset="1" stop-color="#f2f2f2"/></linearGradient></defs><rect x="0.5" y="0.5" width="10" height="10" fill="url(#cbg)" stroke="#a6a6a6"/><rect x="1.5" y="1.5" width="8" height="8" fill="none" stroke="#f2f2f2" stroke-width=".7"/><path d="M2.6 5.3L4.5 8.3L8.4 2.4" fill="none" stroke="#3d5cb8" stroke-width="1.35"/></svg>
<div class="b" style="left:1014px;top:306px;width:59px;height:18px;border:1px solid #cdd0da;border-radius:2px;background:#fff;box-sizing:border-box"></div>
<div class="b" style="left:1059px;top:307px;width:13px;height:16px;border-left:1px solid #d6d9e0;background:#f2f2f4;box-sizing:border-box"></div>
<div class="b" style="left:1060px;top:314px;width:12px;height:1px;background:#d9dce3"></div>
<svg class="b" style="left:1060px;top:307px;" width="12" height="17" viewBox="0 0 12 17"><path d="M3.3 5.7L6 3.3L8.7 5.7M3.3 11L6 13.4L8.7 11" fill="none" stroke="#2b4d98" stroke-width="1.5"/></svg>
<div class="b" style="left:1085px;top:306px;width:59px;height:18px;border:1px solid #cdd0da;border-radius:2px;background:#fff;box-sizing:border-box"></div>
<div class="b" style="left:1130px;top:307px;width:13px;height:16px;border-left:1px solid #d6d9e0;background:#f2f2f4;box-sizing:border-box"></div>
<div class="b" style="left:1131px;top:314px;width:12px;height:1px;background:#d9dce3"></div>
<svg class="b" style="left:1131px;top:307px;" width="12" height="17" viewBox="0 0 12 17"><path d="M3.3 5.7L6 3.3L8.7 5.7M3.3 11L6 13.4L8.7 11" fill="none" stroke="#2b4d98" stroke-width="1.5"/></svg>
<div class="b" style="left:1024px;top:333px;width:110px;height:5px;background:linear-gradient(#c2c2c2 0 1px,#d9d9d9 1px 4px,#c9c9c9 4px)"></div>
<div class="b" style="left:1014px;top:329px;width:12px;height:13px;border:1px solid #a8c6ee;border-radius:3px;background:linear-gradient(#e4effd,#b9d3f5);box-sizing:border-box"></div>
<div class="b" style="left:1018px;top:332px;width:1px;height:7px;background:#7b9bd3"></div>
<div class="b" style="left:1019px;top:332px;width:1px;height:7px;background:#f2f7ff;opacity:.6"></div>
<div class="b" style="left:1132px;top:329px;width:12px;height:13px;border:1px solid #a8c6ee;border-radius:3px;background:linear-gradient(#e4effd,#b9d3f5);box-sizing:border-box"></div>
<div class="b" style="left:1136px;top:332px;width:1px;height:7px;background:#7b9bd3"></div>
<div class="b" style="left:1137px;top:332px;width:1px;height:7px;background:#f2f7ff;opacity:.6"></div>
<div class="b" style="left:996px;top:350px;width:155px;height:1px;background:#d9dee6"></div>
<svg class="b" style="left:1000px;top:358px;" width="11" height="11" viewBox="0 0 11 11"><defs><linearGradient id="cbg" x1="0" y1="0" x2="1" y2="1"><stop offset="0" stop-color="#cdcdcd"/><stop offset="1" stop-color="#f2f2f2"/></linearGradient></defs><rect x="0.5" y="0.5" width="10" height="10" fill="url(#cbg)" stroke="#a6a6a6"/><rect x="1.5" y="1.5" width="8" height="8" fill="none" stroke="#f2f2f2" stroke-width=".7"/><path d="M2.6 5.3L4.5 8.3L8.4 2.4" fill="none" stroke="#3d5cb8" stroke-width="1.35"/></svg>
<div class="b" style="left:1014px;top:375px;width:59px;height:18px;border:1px solid #cdd0da;border-radius:2px;background:#fff;box-sizing:border-box"></div>
<div class="b" style="left:1059px;top:376px;width:13px;height:16px;border-left:1px solid #d6d9e0;background:#f2f2f4;box-sizing:border-box"></div>
<div class="b" style="left:1060px;top:383px;width:12px;height:1px;background:#d9dce3"></div>
<svg class="b" style="left:1060px;top:376px;" width="12" height="17" viewBox="0 0 12 17"><path d="M3.3 5.7L6 3.3L8.7 5.7M3.3 11L6 13.4L8.7 11" fill="none" stroke="#2b4d98" stroke-width="1.5"/></svg>
<div class="b" style="left:1085px;top:375px;width:59px;height:18px;border:1px solid #cdd0da;border-radius:2px;background:#fff;box-sizing:border-box"></div>
<div class="b" style="left:1130px;top:376px;width:13px;height:16px;border-left:1px solid #d6d9e0;background:#f2f2f4;box-sizing:border-box"></div>
<div class="b" style="left:1131px;top:383px;width:12px;height:1px;background:#d9dce3"></div>
<svg class="b" style="left:1131px;top:376px;" width="12" height="17" viewBox="0 0 12 17"><path d="M3.3 5.7L6 3.3L8.7 5.7M3.3 11L6 13.4L8.7 11" fill="none" stroke="#2b4d98" stroke-width="1.5"/></svg>
<div class="b" style="left:1024px;top:403px;width:110px;height:5px;background:linear-gradient(#c2c2c2 0 1px,#d9d9d9 1px 4px,#c9c9c9 4px)"></div>
<div class="b" style="left:1014px;top:399px;width:12px;height:13px;border:1px solid #a8c6ee;border-radius:3px;background:linear-gradient(#e4effd,#b9d3f5);box-sizing:border-box"></div>
<div class="b" style="left:1018px;top:402px;width:1px;height:7px;background:#7b9bd3"></div>
<div class="b" style="left:1019px;top:402px;width:1px;height:7px;background:#f2f7ff;opacity:.6"></div>
<div class="b" style="left:1132px;top:399px;width:12px;height:13px;border:1px solid #a8c6ee;border-radius:3px;background:linear-gradient(#e4effd,#b9d3f5);box-sizing:border-box"></div>
<div class="b" style="left:1136px;top:402px;width:1px;height:7px;background:#7b9bd3"></div>
<div class="b" style="left:1137px;top:402px;width:1px;height:7px;background:#f2f7ff;opacity:.6"></div>
<div class="b" style="left:996px;top:419px;width:155px;height:1px;background:#d9dee6"></div>
<svg class="b" style="left:1000px;top:428px;" width="11" height="11" viewBox="0 0 11 11"><defs><linearGradient id="cbg" x1="0" y1="0" x2="1" y2="1"><stop offset="0" stop-color="#cdcdcd"/><stop offset="1" stop-color="#f2f2f2"/></linearGradient></defs><rect x="0.5" y="0.5" width="10" height="10" fill="url(#cbg)" stroke="#a6a6a6"/><rect x="1.5" y="1.5" width="8" height="8" fill="none" stroke="#f2f2f2" stroke-width=".7"/><path d="M2.6 5.3L4.5 8.3L8.4 2.4" fill="none" stroke="#3d5cb8" stroke-width="1.35"/></svg>
<svg class="b" style="left:1014px;top:449px;" width="11" height="11" viewBox="0 0 11 11"><defs><linearGradient id="cbg" x1="0" y1="0" x2="1" y2="1"><stop offset="0" stop-color="#cdcdcd"/><stop offset="1" stop-color="#f2f2f2"/></linearGradient></defs><rect x="0.5" y="0.5" width="10" height="10" fill="url(#cbg)" stroke="#a6a6a6"/><rect x="1.5" y="1.5" width="8" height="8" fill="none" stroke="#f2f2f2" stroke-width=".7"/><path d="M2.6 5.3L4.5 8.3L8.4 2.4" fill="none" stroke="#3d5cb8" stroke-width="1.35"/></svg>
<svg class="b" style="left:1014px;top:470px;" width="11" height="11" viewBox="0 0 11 11"><defs><linearGradient id="cbg" x1="0" y1="0" x2="1" y2="1"><stop offset="0" stop-color="#cdcdcd"/><stop offset="1" stop-color="#f2f2f2"/></linearGradient></defs><rect x="0.5" y="0.5" width="10" height="10" fill="url(#cbg)" stroke="#a6a6a6"/><rect x="1.5" y="1.5" width="8" height="8" fill="none" stroke="#f2f2f2" stroke-width=".7"/><path d="M2.6 5.3L4.5 8.3L8.4 2.4" fill="none" stroke="#3d5cb8" stroke-width="1.35"/></svg>
<svg class="b" style="left:1014px;top:491px;" width="11" height="11" viewBox="0 0 11 11"><defs><linearGradient id="cbg" x1="0" y1="0" x2="1" y2="1"><stop offset="0" stop-color="#cdcdcd"/><stop offset="1" stop-color="#f2f2f2"/></linearGradient></defs><rect x="0.5" y="0.5" width="10" height="10" fill="url(#cbg)" stroke="#a6a6a6"/><rect x="1.5" y="1.5" width="8" height="8" fill="none" stroke="#f2f2f2" stroke-width=".7"/><path d="M2.6 5.3L4.5 8.3L8.4 2.4" fill="none" stroke="#3d5cb8" stroke-width="1.35"/></svg>
<div class="b" style="left:996px;top:509px;width:155px;height:1px;background:#d9dee6"></div>
<svg class="b" style="left:1059px;top:672px;" width="29" height="6" viewBox="0 0 29 6"><path d="M1 5.5L5 1H24L28 5.5Z" fill="#e4e4e4" stroke="#cfcfcf" stroke-width=".8"/><path d="M11.6 5L14 2.2L16.4 5Z" fill="#111"/></svg>
<div class="b" style="left:995px;top:677px;width:157px;height:21px;background:linear-gradient(#d3e3f5 0 2px,#c9dcf2 2px);border:1px solid #b3cbed;border-bottom:none;box-sizing:border-box"></div>
<div class="b" style="left:1122px;top:681px;width:12px;height:12px;border:1px solid #bcd0ec;border-radius:3px;background:linear-gradient(#ffffff,#eef4fc);box-sizing:border-box"></div>
<svg class="b" style="left:1122px;top:681px;" width="12" height="12" viewBox="0 0 12 12"><path d="M3.6 3L6 5.2L8.4 3M3.6 6.3L6 8.5L8.4 6.3" fill="none" stroke="#4a78b0" stroke-width="1.2"/></svg>
<div class="b" style="left:1135px;top:681px;width:12px;height:12px;border:1px solid #bcd0ec;border-radius:3px;background:linear-gradient(#ffffff,#eef4fc);box-sizing:border-box"></div>
<svg class="b" style="left:1135px;top:681px;" width="12" height="12" viewBox="0 0 12 12"><path d="M2.2 7.6L6.8 2.6L10.4 5.8L7 9.6H3.8Z" fill="#6a8ed8"/><path d="M3 7.6L5 5.8L7.6 8.2L6.6 9.2H3.9Z" fill="#fff"/><path d="M6.8 9.8H10.6" stroke="#6a8ed8" stroke-width="1"/></svg>
<svg class="b" style="left:0;top:0" width="1160" height="698" font-family="Liberation Sans, sans-serif" text-rendering="geometricPrecision"><text x="10.30" y="21.00" font-size="10.2" fill="#2b2b2b" textLength="53.70" lengthAdjust="spacingAndGlyphs" stroke="#2b2b2b" stroke-width="0.2">Chart Wizard</text>
<text x="121.90" y="46.80" font-size="10.0" fill="#333" textLength="43.70" lengthAdjust="spacingAndGlyphs" stroke="#333" stroke-width="0.2">Worksheet</text>
<text x="172.60" y="46.90" font-size="10.5" fill="#333" textLength="20.20" lengthAdjust="spacingAndGlyphs" stroke="#333" stroke-width="0.2">Data</text>
<text x="295.90" y="46.90" font-size="10.0" fill="#3a3a3a" textLength="17.50" lengthAdjust="spacingAndGlyphs" stroke="#3a3a3a" stroke-width="0.2">Data</text>
<text x="321.20" y="46.90" font-size="10.0" fill="#333" textLength="55.30" lengthAdjust="spacingAndGlyphs" stroke="#333" stroke-width="0.2">$A$1:$F$151</text>
<text x="457.70" y="47.10" font-size="10.0" fill="#333" textLength="120.30" lengthAdjust="spacingAndGlyphs" stroke="#333" stroke-width="0.2">First Row Contains Headers</text>
<text x="21.20" y="68.00" font-size="10.2" fill="#1e4896" textLength="39.30" lengthAdjust="spacingAndGlyphs" stroke="#1e4896" stroke-width="0.25">Untitled-1</text>
<text x="40.80" y="93.90" font-size="9.7" fill="#3b5ea6" textLength="52.40" lengthAdjust="spacingAndGlyphs" stroke="#3b5ea6" stroke-width="0.2">Chart Options</text>
<text x="26.50" y="111.50" font-size="10.0" fill="#333" textLength="25.60" lengthAdjust="spacingAndGlyphs" stroke="#333" stroke-width="0.2">X Axis</text>
<text x="26.50" y="132.60" font-size="10.0" fill="#333" textLength="25.60" lengthAdjust="spacingAndGlyphs" stroke="#333" stroke-width="0.2">Y Axis</text>
<text x="77.00" y="110.80" font-size="10.0" fill="#333" textLength="53.10" lengthAdjust="spacingAndGlyphs" stroke="#333" stroke-width="0.2">Petal_length</text>
<text x="77.00" y="132.80" font-size="10.0" fill="#333" textLength="50.10" lengthAdjust="spacingAndGlyphs" stroke="#333" stroke-width="0.2">Petal_width</text>
<text x="620.60" y="111.60" font-size="10.0" fill="#333" textLength="30.00" lengthAdjust="spacingAndGlyphs" stroke="#333" stroke-width="0.2">Size By</text>
<text x="670.00" y="110.80" font-size="10.0" fill="#333" textLength="31.90" lengthAdjust="spacingAndGlyphs" stroke="#333" stroke-width="0.2">No Size</text>
<text x="805.90" y="111.50" font-size="10.0" fill="#333" textLength="36.00" lengthAdjust="spacingAndGlyphs" stroke="#333" stroke-width="0.2">Color By</text>
<text x="805.90" y="132.80" font-size="10.0" fill="#333" textLength="37.00" lengthAdjust="spacingAndGlyphs" stroke="#333" stroke-width="0.2">Panel By</text>
<text x="855.00" y="110.80" font-size="10.0" fill="#333" textLength="38.40" lengthAdjust="spacingAndGlyphs" stroke="#333" stroke-width="0.2">No Color</text>
<text x="855.00" y="132.80" font-size="10.0" fill="#333" textLength="39.60" lengthAdjust="spacingAndGlyphs" stroke="#333" stroke-width="0.2">No Panel</text>
<text x="59.20" y="636.70" font-size="11.9" fill="#2a2a2a" textLength="15.00" lengthAdjust="spacingAndGlyphs" stroke="#2a2a2a" stroke-width="0.05">0.0</text>
<text x="59.20" y="601.58" font-size="11.9" fill="#2a2a2a" textLength="15.00" lengthAdjust="spacingAndGlyphs" stroke="#2a2a2a" stroke-width="0.05">0.2</text>
<text x="59.20" y="566.47" font-size="11.9" fill="#2a2a2a" textLength="15.00" lengthAdjust="spacingAndGlyphs" stroke="#2a2a2a" stroke-width="0.05">0.4</text>
<text x="59.20" y="531.35" font-size="11.9" fill="#2a2a2a" textLength="15.00" lengthAdjust="spacingAndGlyphs" stroke="#2a2a2a" stroke-width="0.05">0.6</text>
<text x="59.20" y="496.24" font-size="11.9" fill="#2a2a2a" textLength="15.00" lengthAdjust="spacingAndGlyphs" stroke="#2a2a2a" stroke-width="0.05">0.8</text>
<text x="59.20" y="461.12" font-size="11.9" fill="#2a2a2a" textLength="15.00" lengthAdjust="spacingAndGlyphs" stroke="#2a2a2a" stroke-width="0.05">1.0</text>
<text x="59.20" y="426.00" font-size="11.9" fill="#2a2a2a" textLength="15.00" lengthAdjust="spacingAndGlyphs" stroke="#2a2a2a" stroke-width="0.05">1.2</text>
<text x="59.20" y="390.89" font-size="11.9" fill="#2a2a2a" textLength="15.00" lengthAdjust="spacingAndGlyphs" stroke="#2a2a2a" stroke-width="0.05">1.4</text>
<text x="59.20" y="355.77" font-size="11.9" fill="#2a2a2a" textLength="15.00" lengthAdjust="spacingAndGlyphs" stroke="#2a2a2a" stroke-width="0.05">1.6</text>
<text x="59.20" y="320.66" font-size="11.9" fill="#2a2a2a" textLength="15.00" lengthAdjust="spacingAndGlyphs" stroke="#2a2a2a" stroke-width="0.05">1.8</text>
<text x="59.20" y="285.54" font-size="11.9" fill="#2a2a2a" textLength="15.00" lengthAdjust="spacingAndGlyphs" stroke="#2a2a2a" stroke-width="0.05">2.0</text>
<text x="59.20" y="250.42" font-size="11.9" fill="#2a2a2a" textLength="15.00" lengthAdjust="spacingAndGlyphs" stroke="#2a2a2a" stroke-width="0.05">2.2</text>
<text x="59.20" y="215.31" font-size="11.9" fill="#2a2a2a" textLength="15.00" lengthAdjust="spacingAndGlyphs" stroke="#2a2a2a" stroke-width="0.05">2.4</text>
<text x="59.20" y="180.19" font-size="11.9" fill="#2a2a2a" textLength="15.00" lengthAdjust="spacingAndGlyphs" stroke="#2a2a2a" stroke-width="0.05">2.6</text>
<text x="72.50" y="652.30" font-size="11.9" fill="#2a2a2a" textLength="15.00" lengthAdjust="spacingAndGlyphs" stroke="#2a2a2a" stroke-width="0.05">1.0</text>
<text x="147.22" y="652.30" font-size="11.9" fill="#2a2a2a" textLength="15.00" lengthAdjust="spacingAndGlyphs" stroke="#2a2a2a" stroke-width="0.05">1.5</text>
<text x="221.95" y="652.30" font-size="11.9" fill="#2a2a2a" textLength="15.00" lengthAdjust="spacingAndGlyphs" stroke="#2a2a2a" stroke-width="0.05">2.0</text>
<text x="296.67" y="652.30" font-size="11.9" fill="#2a2a2a" textLength="15.00" lengthAdjust="spacingAndGlyphs" stroke="#2a2a2a" stroke-width="0.05">2.5</text>
<text x="371.40" y="652.30" font-size="11.9" fill="#2a2a2a" textLength="15.00" lengthAdjust="spacingAndGlyphs" stroke="#2a2a2a" stroke-width="0.05">3.0</text>
<text x="446.12" y="652.30" font-size="11.9" fill="#2a2a2a" textLength="15.00" lengthAdjust="spacingAndGlyphs" stroke="#2a2a2a" stroke-width="0.05">3.5</text>
<text x="520.85" y="652.30" font-size="11.9" fill="#2a2a2a" textLength="15.00" lengthAdjust="spacingAndGlyphs" stroke="#2a2a2a" stroke-width="0.05">4.0</text>
<text x="595.57" y="652.30" font-size="11.9" fill="#2a2a2a" textLength="15.00" lengthAdjust="spacingAndGlyphs" stroke="#2a2a2a" stroke-width="0.05">4.5</text>
<text x="670.30" y="652.30" font-size="11.9" fill="#2a2a2a" textLength="15.00" lengthAdjust="spacingAndGlyphs" stroke="#2a2a2a" stroke-width="0.05">5.0</text>
<text x="745.02" y="652.30" font-size="11.9" fill="#2a2a2a" textLength="15.00" lengthAdjust="spacingAndGlyphs" stroke="#2a2a2a" stroke-width="0.05">5.5</text>
<text x="819.75" y="652.30" font-size="11.9" fill="#2a2a2a" textLength="15.00" lengthAdjust="spacingAndGlyphs" stroke="#2a2a2a" stroke-width="0.05">6.0</text>
<text x="894.47" y="652.30" font-size="11.9" fill="#2a2a2a" textLength="15.00" lengthAdjust="spacingAndGlyphs" stroke="#2a2a2a" stroke-width="0.05">6.5</text>
<text x="485.65" y="674.00" font-size="13.8" fill="#111" textLength="70.70" lengthAdjust="spacingAndGlyphs" stroke="#111" stroke-width="0.2">Petal_length</text>
<text x="0" y="0" font-size="13.8" fill="#111" textLength="66.4" lengthAdjust="spacingAndGlyphs" transform="translate(41 437.4) rotate(-90)">Petal_width</text>
<text x="1000.80" y="46.10" font-size="10.0" fill="#1f4b9b" textLength="24.20" lengthAdjust="spacingAndGlyphs" stroke="#1f4b9b" stroke-width="0.35">Filters</text>
<text x="1013.70" y="71.10" font-size="10.5" fill="#1a1a1a" textLength="49.60" lengthAdjust="spacingAndGlyphs" stroke="#1a1a1a" stroke-width="0.2">Species_No</text>
<text x="1028.80" y="92.00" font-size="10.2" fill="#3a3a3a" textLength="3.60" lengthAdjust="spacingAndGlyphs" stroke="#3a3a3a" stroke-width="0.08">1</text>
<text x="1028.80" y="113.00" font-size="10.2" fill="#3a3a3a" textLength="5.00" lengthAdjust="spacingAndGlyphs" stroke="#3a3a3a" stroke-width="0.08">2</text>
<text x="1028.80" y="134.00" font-size="10.2" fill="#3a3a3a" textLength="5.00" lengthAdjust="spacingAndGlyphs" stroke="#3a3a3a" stroke-width="0.08">3</text>
<text x="1014.00" y="161.00" font-size="10.5" fill="#1a1a1a" textLength="49.90" lengthAdjust="spacingAndGlyphs" stroke="#1a1a1a" stroke-width="0.2">Petal_width</text>
<text x="1017.40" y="180.70" font-size="10.2" fill="#3a3a3a" textLength="13.47" lengthAdjust="spacingAndGlyphs" stroke="#3a3a3a" stroke-width="0.2">0.1</text>
<text x="1088.40" y="180.70" font-size="10.2" fill="#3a3a3a" textLength="13.47" lengthAdjust="spacingAndGlyphs" stroke="#3a3a3a" stroke-width="0.2">2.5</text>
<text x="1014.00" y="229.00" font-size="10.5" fill="#1a1a1a" textLength="53.30" lengthAdjust="spacingAndGlyphs" stroke="#1a1a1a" stroke-width="0.2">Petal_length</text>
<text x="1017.40" y="249.70" font-size="10.2" fill="#3a3a3a" textLength="5.39" lengthAdjust="spacingAndGlyphs" stroke="#3a3a3a" stroke-width="0.2">1</text>
<text x="1088.40" y="249.70" font-size="10.2" fill="#3a3a3a" textLength="13.47" lengthAdjust="spacingAndGlyphs" stroke="#3a3a3a" stroke-width="0.2">6.9</text>
<text x="1014.00" y="298.00" font-size="10.5" fill="#1a1a1a" textLength="51.60" lengthAdjust="spacingAndGlyphs" stroke="#1a1a1a" stroke-width="0.2">Sepal_width</text>
<text x="1017.40" y="317.70" font-size="10.2" fill="#3a3a3a" textLength="5.39" lengthAdjust="spacingAndGlyphs" stroke="#3a3a3a" stroke-width="0.2">2</text>
<text x="1088.40" y="317.70" font-size="10.2" fill="#3a3a3a" textLength="13.47" lengthAdjust="spacingAndGlyphs" stroke="#3a3a3a" stroke-width="0.2">4.4</text>
<text x="1014.00" y="367.00" font-size="10.5" fill="#1a1a1a" textLength="55.50" lengthAdjust="spacingAndGlyphs" stroke="#1a1a1a" stroke-width="0.2">Sepal_length</text>
<text x="1017.40" y="386.70" font-size="10.2" fill="#3a3a3a" textLength="13.47" lengthAdjust="spacingAndGlyphs" stroke="#3a3a3a" stroke-width="0.2">4.3</text>
<text x="1088.40" y="386.70" font-size="10.2" fill="#3a3a3a" textLength="13.47" lengthAdjust="spacingAndGlyphs" stroke="#3a3a3a" stroke-width="0.2">7.9</text>
<text x="1014.00" y="437.00" font-size="10.5" fill="#1a1a1a" textLength="61.80" lengthAdjust="spacingAndGlyphs" stroke="#1a1a1a" stroke-width="0.2">Species_name</text>
<text x="1028.10" y="458.00" font-size="10.2" fill="#3a3a3a" textLength="28.80" lengthAdjust="spacingAndGlyphs" stroke="#3a3a3a" stroke-width="0.2">Setosa</text>
<text x="1028.10" y="479.00" font-size="10.2" fill="#3a3a3a" textLength="39.90" lengthAdjust="spacingAndGlyphs" stroke="#3a3a3a" stroke-width="0.2">Verginica</text>
<text x="1028.10" y="500.00" font-size="10.2" fill="#3a3a3a" textLength="43.50" lengthAdjust="spacingAndGlyphs" stroke="#3a3a3a" stroke-width="0.2">Versicolor</text>
<text x="1000.80" y="690.50" font-size="10.0" fill="#1f4b9b" textLength="53.10" lengthAdjust="spacingAndGlyphs" stroke="#1f4b9b" stroke-width="0.35">Observations</text></svg>
</body></html>
